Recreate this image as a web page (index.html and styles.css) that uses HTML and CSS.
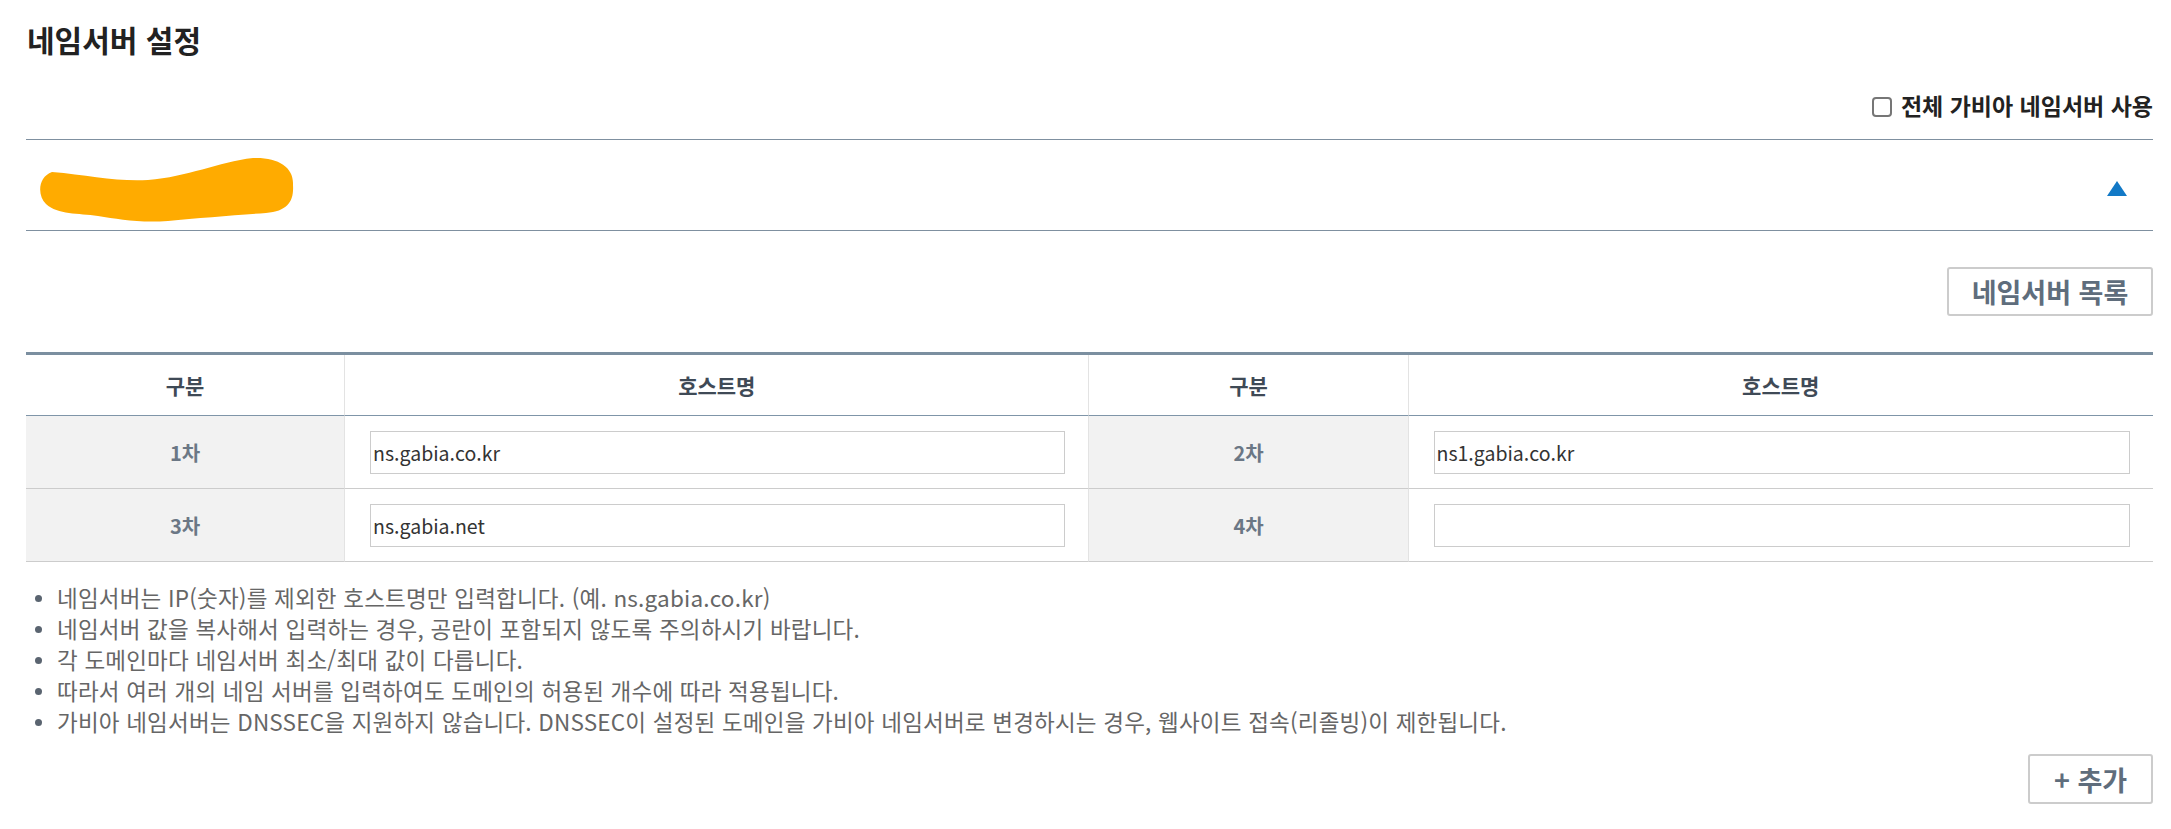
FILE: index.html
```html
<!DOCTYPE html>
<html lang="ko">
<head>
<meta charset="utf-8">
<title>네임서버 설정</title>
<link rel="stylesheet" href="styles.css">
</head>
<body>
<div class="page">
  <h1 class="title">네임서버 설정</h1>

  <div class="all-row">
    <label class="all-label"><input type="checkbox" class="chk"><span>전체 가비아 네임서버 사용</span></label>
  </div>

  <div class="domain-row">
    <svg class="blob" width="258" height="67" viewBox="0 0 258 67" aria-hidden="true">
      <path d="M14,15 C50,18 80,25 110,23 C150,20 180,5 215,1 C240,0 256,10 255,28 C256,44 250,54 228,56 C200,58 160,61 130,64 C100,66 80,62 60,59 C40,56 20,58 8,47 C-1,38 0,20 14,15 Z" fill="#FFAB00"/>
    </svg>
    <svg class="caret" width="20" height="15" viewBox="0 0 20 15" aria-hidden="true">
      <polygon points="10,0 20,15 0,15" fill="#1279c6"/>
    </svg>
  </div>

  <div class="btn-row">
    <button class="btn btn-list">네임서버 목록</button>
  </div>

  <div class="ns-grid">
    <div class="cell head">구분</div>
    <div class="cell head">호스트명</div>
    <div class="cell head">구분</div>
    <div class="cell head last">호스트명</div>

    <div class="cell label">1차</div>
    <div class="cell field"><input class="host" type="text" value="ns.gabia.co.kr"></div>
    <div class="cell label">2차</div>
    <div class="cell field last"><input class="host" type="text" value="ns1.gabia.co.kr"></div>

    <div class="cell label">3차</div>
    <div class="cell field"><input class="host" type="text" value="ns.gabia.net"></div>
    <div class="cell label">4차</div>
    <div class="cell field last"><input class="host" type="text" value=""></div>
  </div>

  <ul class="notes">
    <li>네임서버는 IP(숫자)를 제외한 호스트명만 입력합니다. (예. ns.gabia.co.kr)</li>
    <li>네임서버 값을 복사해서 입력하는 경우, 공란이 포함되지 않도록 주의하시기 바랍니다.</li>
    <li>각 도메인마다 네임서버 최소/최대 값이 다릅니다.</li>
    <li>따라서 여러 개의 네임 서버를 입력하여도 도메인의 허용된 개수에 따라 적용됩니다.</li>
    <li>가비아 네임서버는 DNSSEC을 지원하지 않습니다. DNSSEC이 설정된 도메인을 가비아 네임서버로 변경하시는 경우, 웹사이트 접속(리졸빙)이 제한됩니다.</li>
  </ul>

  <div class="add-row">
    <button class="btn btn-add">+ 추가</button>
  </div>
</div>
</body>
</html>
```

FILE: styles.css
```css
html, body {
  margin: 0;
  padding: 0;
  background: #ffffff;
}

body {
  font-family: "Noto Sans CJK KR", "Noto Sans", sans-serif;
  color: #333333;
}

.page {
  padding: 0 18px 0 26px;
}

.title {
  margin: 19px 0 0 1px;
  font-size: 30px;
  line-height: 40px;
  font-weight: 700;
  color: #222222;
}

.all-row {
  margin-top: 31px;
  height: 30px;
  margin-bottom: 19px;
  display: flex;
  justify-content: flex-end;
  align-items: center;
}

.all-label {
  display: flex;
  align-items: center;
  font-size: 23px;
  font-weight: 700;
  color: #222222;
  line-height: 30px;
}

.chk {
  appearance: none;
  -webkit-appearance: none;
  width: 20px;
  height: 20px;
  margin: 4px 9px 0 0;
  border: 2px solid #767676;
  border-radius: 4px;
  background: #fff;
  box-sizing: border-box;
}

.domain-row {
  height: 90px;
  border-top: 1px solid #7f90a0;
  border-bottom: 1px solid #7f90a0;
  display: flex;
  justify-content: space-between;
  align-items: center;
  padding: 0 26px 0 12px;
}

.blob {
  display: block;
  margin-top: 11px;
}

.caret {
  display: block;
  margin-top: 6px;
}

.btn-row {
  margin-top: 36px;
  display: flex;
  justify-content: flex-end;
}

.btn {
  font-family: "Noto Sans CJK KR", "Noto Sans", sans-serif;
  font-weight: 700;
  color: #5f6d7c;
  background: #ffffff;
  border: 2px solid #cccccc;
  border-radius: 3px;
  box-sizing: border-box;
  padding: 0;
  cursor: pointer;
}

.btn-list {
  width: 206px;
  height: 49px;
  font-size: 27px;
}

.ns-grid {
  margin-top: 36px;
  display: grid;
  grid-template-columns: 15% 35% 15% 35%;
  border-top: 3px solid #7b8fa0;
}

.cell {
  display: flex;
  align-items: center;
  justify-content: center;
  box-sizing: border-box;
  border-right: 1px solid #e3e3e3;
}

.cell.last {
  border-right: none;
}

.head {
  height: 61px;
  border-bottom: 1px solid #7f95a8;
  font-size: 21px;
  font-weight: 700;
  color: #3f4a56;
}

.label {
  height: 73px;
  border-bottom: 1px solid #cccccc;
  background: #f2f2f2;
  font-size: 20px;
  font-weight: 700;
  color: #6b7785;
}

.field {
  height: 73px;
  border-bottom: 1px solid #cccccc;
  padding: 0 23px 0 25px;
}

.host {
  width: 100%;
  height: 43px;
  box-sizing: border-box;
  border: 1px solid #cccccc;
  padding: 0 2px;
  font-family: "Noto Sans CJK KR", "Noto Sans", sans-serif;
  font-size: 19.5px;
  color: #333333;
  background: #ffffff;
  outline: none;
}

.notes {
  list-style: none;
  margin: 20px 0 0 0;
  padding: 0;
}

.notes li {
  position: relative;
  padding-left: 31px;
  font-size: 22.5px;
  letter-spacing: 0.2px;
  line-height: 31px;
  color: #666666;
}

.notes li::before {
  content: "";
  position: absolute;
  left: 9px;
  top: 13px;
  width: 7px;
  height: 7px;
  border-radius: 50%;
  background: #5a6470;
}

.add-row {
  margin-top: 17px;
  display: flex;
  justify-content: flex-end;
}

.btn-add {
  width: 125px;
  height: 50px;
  font-size: 27px;
}
```
